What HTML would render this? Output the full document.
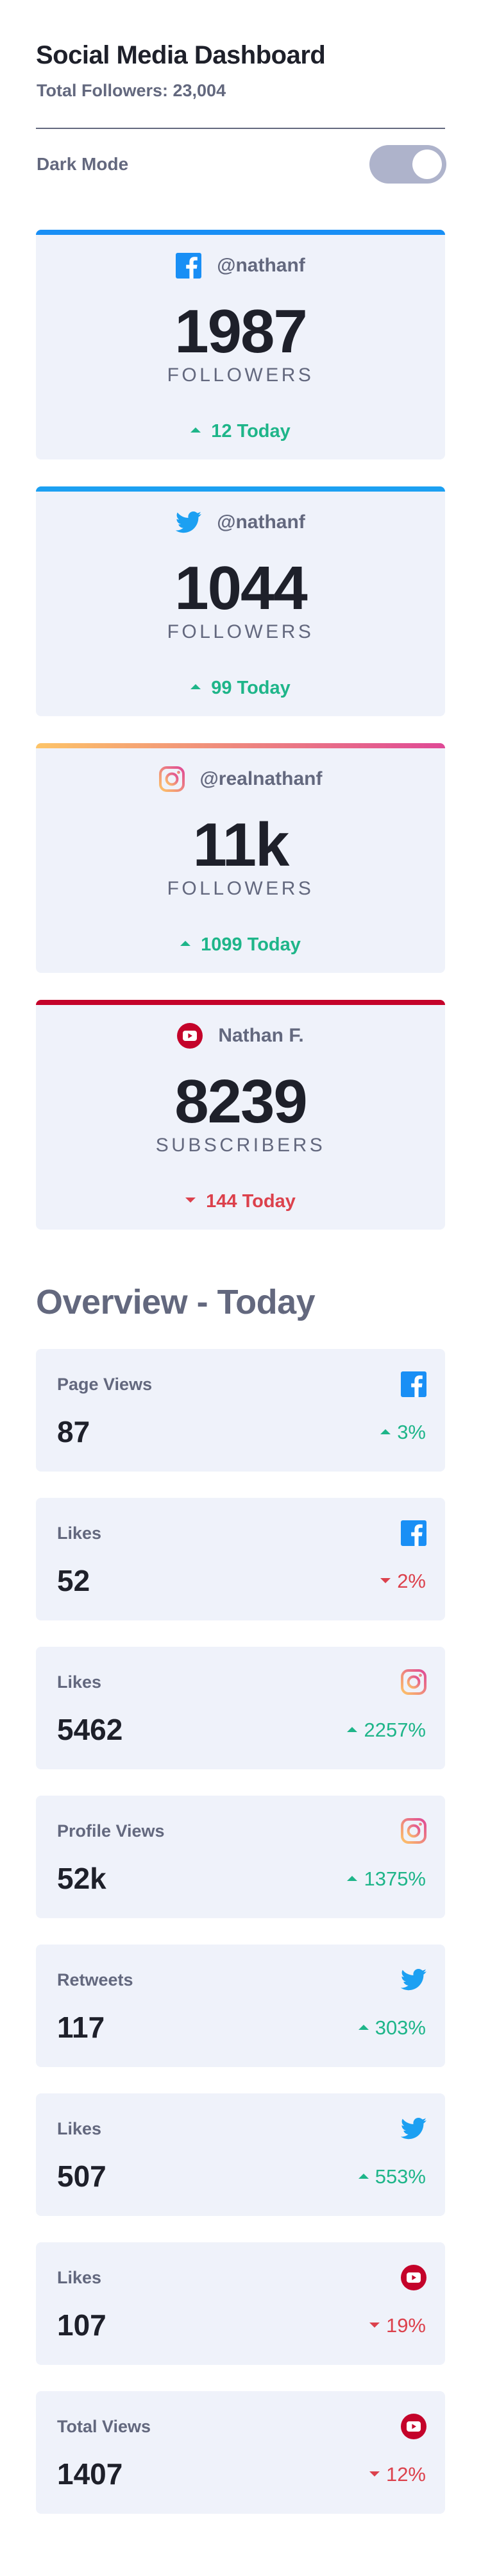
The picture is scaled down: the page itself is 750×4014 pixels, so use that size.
<!DOCTYPE html>
<html><head><meta charset="utf-8"><style>
*{box-sizing:border-box;margin:0;padding:0}
body{width:750px;height:4014px;background:#fff;font-family:"Liberation Sans",sans-serif;color:#1e202a;position:relative;overflow:hidden}
h1{position:absolute;left:56px;top:64px;font-size:40px;font-weight:bold;color:#1e202a;letter-spacing:-0.5px}
.sub{position:absolute;left:57px;top:126px;font-size:27px;font-weight:bold;color:#63687e}
.div{position:absolute;left:56px;top:199px;width:638px;height:2px;background:#63687e}
.dm{position:absolute;left:57px;top:240px;font-size:28px;font-weight:bold;color:#63687e}
.tog{position:absolute;left:576px;top:226px;width:120px;height:60px;border-radius:30px;background:#aeb3cb}
.tog:after{content:"";position:absolute;right:7px;top:7px;width:46px;height:46px;border-radius:50%;background:#fff}
.card{position:absolute;left:56px;width:638px;height:358px;background:#eff2fa;border-radius:8px;overflow:hidden;text-align:center}
.bar{height:8px;width:100%}
.handle{position:absolute;top:36px;left:0;width:100%;display:flex;justify-content:center;align-items:center;gap:24px;font-size:30px;font-weight:bold;color:#63687e}
.handle svg{width:40px;height:40px}
.num{position:absolute;top:104px;width:100%;font-size:96px;font-weight:bold;color:#1e202a;letter-spacing:-2px}
.lab{position:absolute;top:210px;width:100%;font-size:30px;letter-spacing:4.5px;color:#63687e}
.today{position:absolute;top:298px;width:100%;font-size:29px;font-weight:bold}
.up{color:#1eb589}.dn{color:#dc414c}
.tri{display:inline-block;width:0;height:0;border-left:8px solid transparent;border-right:8px solid transparent;vertical-align:middle;margin-right:16px;position:relative;top:-3px}
.tri.u{border-bottom:8px solid #1eb589}.tri.d{border-top:8px solid #dc414c}
h2{position:absolute;left:56px;top:1998px;font-size:54px;font-weight:bold;color:#63687e;letter-spacing:-0.5px}
.ov{position:absolute;left:56px;width:638px;height:191px;background:#eff2fa;border-radius:8px}
.ov .t{position:absolute;left:33px;top:40px;font-size:27px;font-weight:bold;color:#63687e}
.ov svg{position:absolute;right:29px;top:35px;width:40px;height:40px}
.ov .n{position:absolute;left:33px;top:102px;font-size:46px;font-weight:bold;color:#1e202a}
.ov .p{position:absolute;right:30px;top:112px;font-size:31px}
.ov .p .tri{margin-right:10px}
</style></head><body>
<svg width="0" height="0" style="position:absolute"><defs>
<linearGradient id="ig" x1="0" y1="1" x2="1" y2="0"><stop offset="0" stop-color="#fdc468"/><stop offset="1" stop-color="#df4996"/></linearGradient>
<symbol id="fb" viewBox="0 0 20 20"><rect width="20" height="20" rx="1.5" fill="#198ff5"/><path d="M13.8 20v-7.7h2.6l.4-3h-3V7.4c0-.9.2-1.5 1.5-1.5h1.6V3.2c-.3 0-1.2-.1-2.3-.1-2.3 0-3.9 1.4-3.9 4v2.2H8.1v3h2.6V20z" fill="#fff"/></symbol>
<symbol id="tw" viewBox="0 0 20 17"><path d="M20 2c-.7.3-1.5.5-2.4.6.9-.5 1.5-1.3 1.8-2.3-.8.5-1.7.8-2.6 1C16 .5 15 0 13.8 0c-2.3 0-4.1 1.8-4.100 4.1 0 .3 0 .6.1.9C6.4 4.9 3.3 3.3 1.4.8 1 1.4.8 2.1.8 2.9c0 1.4.7 2.7 1.8 3.4-.7 0-1.3-.2-1.9-.5 0 2 1.4 3.7 3.3 4.1-.6.2-1.2.2-1.9.1.5 1.6 2 2.8 3.8 2.9-1.7 1.3-3.900 2.1-6.1 1.8C1.6 15.9 3.7 16.6 6 16.6c7.5 0 11.7-6.3 11.7-11.7v-.5C18.7 3.7 19.4 2.9 20 2z" fill="#1ca0f2"/></symbol>
<symbol id="ins" viewBox="0 0 20 20"><rect x="1" y="1" width="18" height="18" rx="5" fill="none" stroke="url(#ig)" stroke-width="2"/><circle cx="10" cy="10" r="4.2" fill="none" stroke="url(#ig)" stroke-width="2"/><circle cx="15.2" cy="4.8" r="1.2" fill="url(#ig)"/></symbol>
<symbol id="yt" viewBox="0 0 20 20"><circle cx="10" cy="10" r="10" fill="#c4032a"/><rect x="4.5" y="6" width="11" height="8" rx="2" fill="#fff"/><path d="M8.7 8v4l3.3-2z" fill="#c4032a"/></symbol>
</defs></svg>

<h1>Social Media Dashboard</h1>
<div class="sub">Total Followers: 23,004</div>
<div class="div"></div>
<div class="dm">Dark Mode</div>
<div class="tog"></div>

<div class="card" style="top:358px"><div class="bar" style="background:#198ff5"></div>
<div class="handle"><svg><use href="#fb"/></svg>@nathanf</div>
<div class="num">1987</div><div class="lab">FOLLOWERS</div>
<div class="today up"><span class="tri u"></span>12 Today</div></div>

<div class="card" style="top:758px"><div class="bar" style="background:#1ca0f2"></div>
<div class="handle"><svg viewBox="0 0 20 17"><use href="#tw"/></svg>@nathanf</div>
<div class="num">1044</div><div class="lab">FOLLOWERS</div>
<div class="today up"><span class="tri u"></span>99 Today</div></div>

<div class="card" style="top:1158px"><div class="bar" style="background:linear-gradient(90deg,#fdc468,#df4996)"></div>
<div class="handle"><svg><use href="#ins"/></svg>@realnathanf</div>
<div class="num">11k</div><div class="lab">FOLLOWERS</div>
<div class="today up"><span class="tri u"></span>1099 Today</div></div>

<div class="card" style="top:1558px"><div class="bar" style="background:#c4032a"></div>
<div class="handle"><svg><use href="#yt"/></svg>Nathan F.</div>
<div class="num">8239</div><div class="lab">SUBSCRIBERS</div>
<div class="today dn"><span class="tri d"></span>144 Today</div></div>

<h2>Overview - Today</h2>

<div class="ov" style="top:2102px"><div class="t">Page Views</div><svg><use href="#fb"/></svg><div class="n">87</div><div class="p up"><span class="tri u"></span>3%</div></div>
<div class="ov" style="top:2334px"><div class="t">Likes</div><svg><use href="#fb"/></svg><div class="n">52</div><div class="p dn"><span class="tri d"></span>2%</div></div>
<div class="ov" style="top:2566px"><div class="t">Likes</div><svg><use href="#ins"/></svg><div class="n">5462</div><div class="p up"><span class="tri u"></span>2257%</div></div>
<div class="ov" style="top:2798px"><div class="t">Profile Views</div><svg><use href="#ins"/></svg><div class="n">52k</div><div class="p up"><span class="tri u"></span>1375%</div></div>
<div class="ov" style="top:3030px"><div class="t">Retweets</div><svg viewBox="0 0 20 17"><use href="#tw"/></svg><div class="n">117</div><div class="p up"><span class="tri u"></span>303%</div></div>
<div class="ov" style="top:3262px"><div class="t">Likes</div><svg viewBox="0 0 20 17"><use href="#tw"/></svg><div class="n">507</div><div class="p up"><span class="tri u"></span>553%</div></div>
<div class="ov" style="top:3494px"><div class="t">Likes</div><svg><use href="#yt"/></svg><div class="n">107</div><div class="p dn"><span class="tri d"></span>19%</div></div>
<div class="ov" style="top:3726px"><div class="t">Total Views</div><svg><use href="#yt"/></svg><div class="n">1407</div><div class="p dn"><span class="tri d"></span>12%</div></div>
</body></html>
